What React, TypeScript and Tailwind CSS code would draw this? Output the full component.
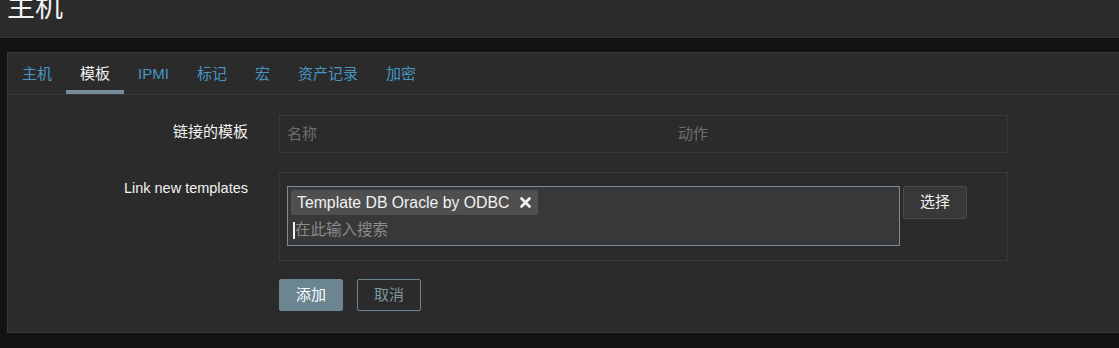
import React from "react";

const tabs = ["主机", "模板", "IPMI", "标记", "宏", "资产记录", "加密"];

export default function App() {
  return (
    <div
      className="w-full h-[348px] overflow-hidden bg-[#111214] text-[15px] text-[#f2f2f2]"
      style={{ fontFamily: '"Liberation Sans", Arial, "Noto Sans CJK SC", sans-serif' }}
    >
      <header className="h-[38px] bg-[#2b2b2b] border-b border-[#333333] overflow-hidden pl-[7px]">
        <h1 className="text-[28px] leading-[28px] -mt-[6px] text-[#f2f2f2] font-normal">主机</h1>
      </header>

      <div className="pt-[14px] pl-[7px]">
        <div className="bg-[#2b2b2b] border-l border-t border-b border-[#383838]">
          <ul className="flex h-[42px] border-b border-[#383838]">
            {tabs.map((t, i) => (
              <li
                key={t}
                className={
                  i === 1
                    ? "px-[14px] pt-[5px] flex items-center border-b-4 border-[#768d99] text-[#f2f2f2]"
                    : "px-[14px] pt-[5px] flex items-center border-b-4 border-transparent text-[#4796c4]"
                }
              >
                {t}
              </li>
            ))}
          </ul>

          <div className="pt-[20px] pb-[21px]">
            <div className="grid grid-cols-[240px_729px] gap-x-[31px]">
              <label className="text-right pt-[7px] leading-5">链接的模板</label>
              <div className="h-[38px] border border-[#383838] grid grid-cols-[390px_1fr] items-center text-[#6f6f6f]">
                <span className="pl-[7px]">名称</span>
                <span className="pl-[8px]">动作</span>
              </div>
            </div>

            <div className="grid grid-cols-[240px_729px] gap-x-[31px] mt-[19px]">
              <label className="text-right pt-[6px] leading-5 text-[14.5px]">Link new templates</label>
              <div className="h-[89px] border border-[#383838] pt-[13px] pl-[7px] flex items-start gap-[3px]">
                <div className="w-[613px] h-[60px] border border-[#768d99] bg-[#383838] p-[3px] pb-0 flex flex-col">
                  <div className="self-start h-[25px] rounded-[2px] bg-[#4f4f4f] pl-[6px] pr-[7px] flex items-center gap-[11px]">
                    <span className="leading-5 text-[15.8px]">Template DB Oracle by ODBC</span>
                    <svg width="11" height="11" viewBox="0 0 11 11" className="shrink-0">
                      <path d="M1.5 1.5L9.5 9.5M9.5 1.5L1.5 9.5" stroke="#f2f2f2" strokeWidth="2.6" strokeLinecap="round" />
                    </svg>
                  </div>
                  <div className="flex-1 flex items-center pl-[2px]">
                    <span className="w-[2px] h-[17px] bg-[#f2f2f2]" />
                    <span className="text-[#8a8a8a] leading-5 text-[15.5px]">在此输入搜索</span>
                  </div>
                </div>
                <button className="w-[64px] h-[33px] rounded-[2px] border border-[#4a4a4a] bg-[#383838] text-[#f2f2f2]">
                  选择
                </button>
              </div>
            </div>

            <div className="ml-[271px] mt-[18px] flex gap-[14px]">
              <button className="w-[64px] h-[32px] rounded-[2px] bg-[#6b8591] border border-[#6b8591] text-white">
                添加
              </button>
              <button className="w-[64px] h-[32px] rounded-[2px] border border-[#6b8591] text-[#7f96a2]">
                取消
              </button>
            </div>
          </div>
        </div>
      </div>
    </div>
  );
}
